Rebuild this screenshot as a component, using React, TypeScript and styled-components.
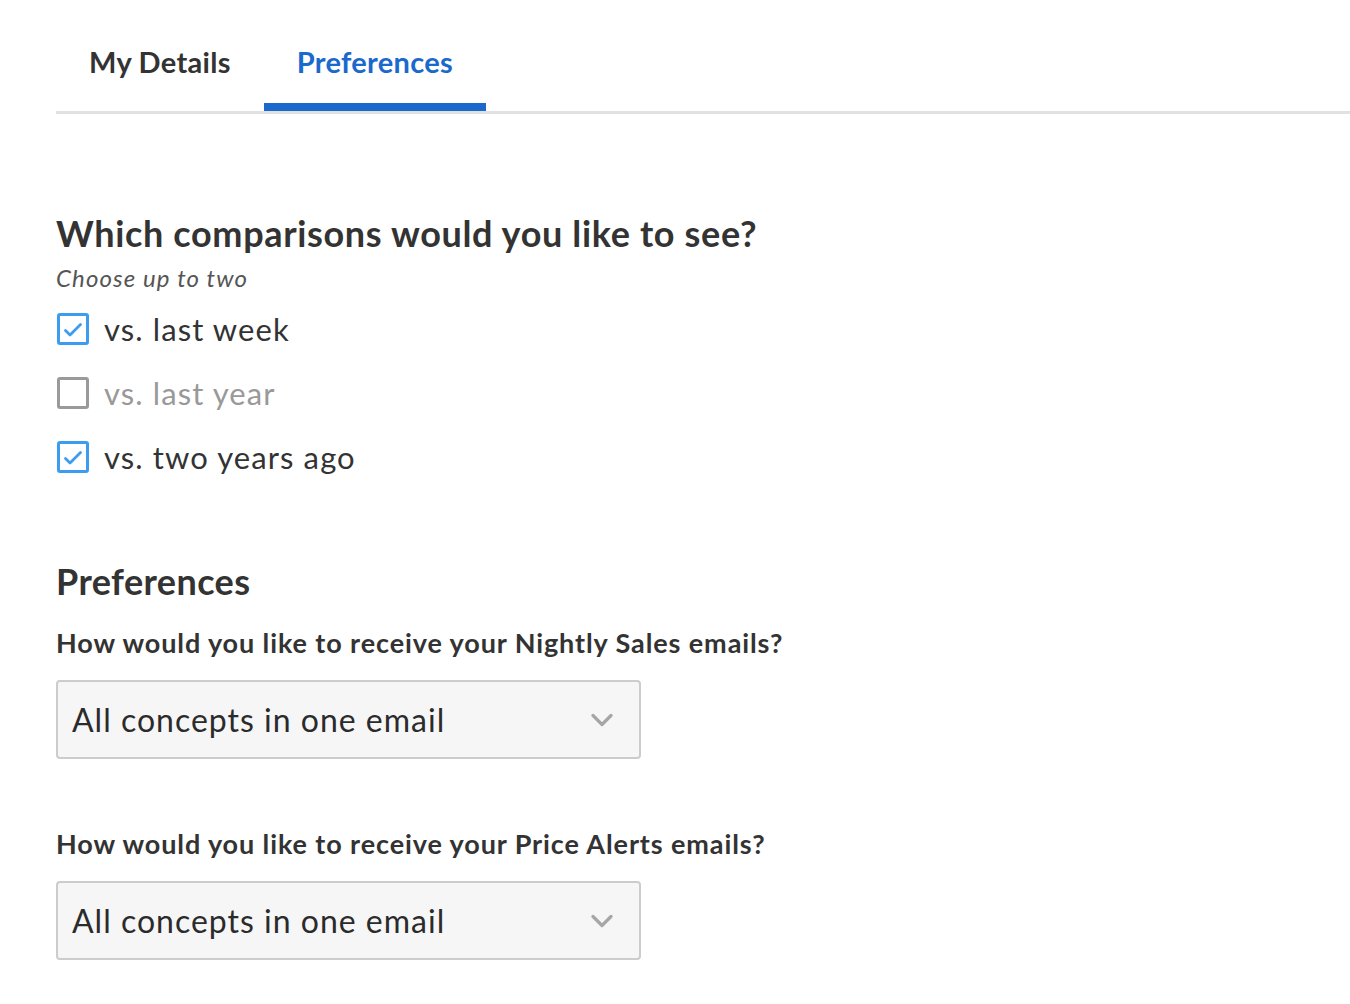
import React, { useState } from "react";
import styled, { createGlobalStyle } from "styled-components";

const Global = createGlobalStyle`
  body {
    margin: 0;
    background: #ffffff;
    font-family: Lato, "Open Sans", sans-serif;
    color: #333333;
  }
`;

const S = {
  Page: styled.div`
    padding-left: 56px;
  `,
  Tabs: styled.nav`
    display: flex;
    border-bottom: 3px solid #e1e1e1;
    height: 111px;
  `,
  Tab: styled.button<{ $active?: boolean }>`
    display: flex;
    align-items: flex-start;
    padding: 44px 33px 0;
    border: none;
    border-bottom: 8px solid ${(p) => (p.$active ? "#1a69cc" : "transparent")};
    background: none;
    font-family: inherit;
    font-size: 29px;
    font-weight: 700;
    letter-spacing: 0.3px;
    color: ${(p) => (p.$active ? "#1a69cc" : "#333333")};
    cursor: pointer;
  `,
  Section: styled.section`
    display: flex;
    flex-direction: column;
    padding-top: 97px;
  `,
  Heading: styled.h2`
    margin: 0;
    font-size: 36px;
    font-weight: 700;
    letter-spacing: 0.65px;
    line-height: 44px;
    color: #333333;
  `,
  Hint: styled.p`
    margin: 8px 0 21px;
    font-size: 24px;
    font-style: italic;
    letter-spacing: 1.1px;
    color: #555555;
  `,
  Options: styled.div`
    display: flex;
    flex-direction: column;
    gap: 32px;
  `,
  Option: styled.label<{ $checked: boolean }>`
    display: flex;
    align-items: center;
    gap: 15px;
    font-size: 31px;
    letter-spacing: 1.1px;
    line-height: 32px;
    color: ${(p) => (p.$checked ? "#333333" : "#999999")};
    cursor: pointer;
  `,
  Box: styled.span<{ $checked: boolean }>`
    box-sizing: border-box;
    display: flex;
    align-items: center;
    justify-content: center;
    width: 32px;
    height: 32px;
    margin-left: 1px;
    border: 3px solid ${(p) => (p.$checked ? "#3b9cf0" : "#9a9a9a")};
    border-radius: 3px;
    background: #ffffff;
  `,
  Subheading: styled.h2`
    margin: 86px 0 0;
    font-size: 36px;
    font-weight: 700;
    letter-spacing: 0.4px;
    line-height: 44px;
  `,
  Question: styled.h3`
    margin: 23px 0 20px;
    font-size: 27px;
    font-weight: 700;
    letter-spacing: 0.9px;
    line-height: 34px;
  `,
  Select: styled.div`
    box-sizing: border-box;
    display: flex;
    align-items: center;
    justify-content: space-between;
    width: 585px;
    height: 79px;
    padding: 0 26px 0 14px;
    border: 2px solid #cccccc;
    border-radius: 4px;
    background: #f6f6f6;
    font-size: 32px;
    letter-spacing: 1px;
    color: #2b2b2b;
    margin-bottom: 45px;
  `,
};

function Check() {
  return (
    <svg width="20" height="16" viewBox="0 0 20 16" fill="none">
      <path d="M2.5 9.5l4.5 4.5L17.5 3.5" stroke="#3b9cf0" strokeWidth="2.8" strokeLinecap="round" strokeLinejoin="round" />
    </svg>
  );
}

function Chevron() {
  return (
    <svg width="22" height="14" viewBox="0 0 22 14" fill="none">
      <path d="M2 2.5l9 9 9-9" stroke="#a6a6a6" strokeWidth="3.2" strokeLinecap="round" strokeLinejoin="round" />
    </svg>
  );
}

const comparisons = ["vs. last week", "vs. last year", "vs. two years ago"];

export default function App() {
  const [checked, setChecked] = useState<boolean[]>([true, false, true]);

  const toggle = (index: number) => () => {
    setChecked((prev) => prev.map((value, i) => (i === index ? !value : value)));
  };

  return (
    <>
      <Global />
      <S.Page>
        <S.Tabs>
          <S.Tab>My Details</S.Tab>
          <S.Tab $active>Preferences</S.Tab>
        </S.Tabs>
        <S.Section>
          <S.Heading>Which comparisons would you like to see?</S.Heading>
          <S.Hint>Choose up to two</S.Hint>
          <S.Options>
            {comparisons.map((label, index) => (
              <S.Option key={label} $checked={checked[index]} onClick={toggle(index)}>
                <S.Box $checked={checked[index]}>{checked[index] && <Check />}</S.Box>
                {label}
              </S.Option>
            ))}
          </S.Options>
          <S.Subheading>Preferences</S.Subheading>
          <S.Question>How would you like to receive your Nightly Sales emails?</S.Question>
          <S.Select>
            All concepts in one email
            <Chevron />
          </S.Select>
          <S.Question>How would you like to receive your Price Alerts emails?</S.Question>
          <S.Select>
            All concepts in one email
            <Chevron />
          </S.Select>
        </S.Section>
      </S.Page>
    </>
  );
}
